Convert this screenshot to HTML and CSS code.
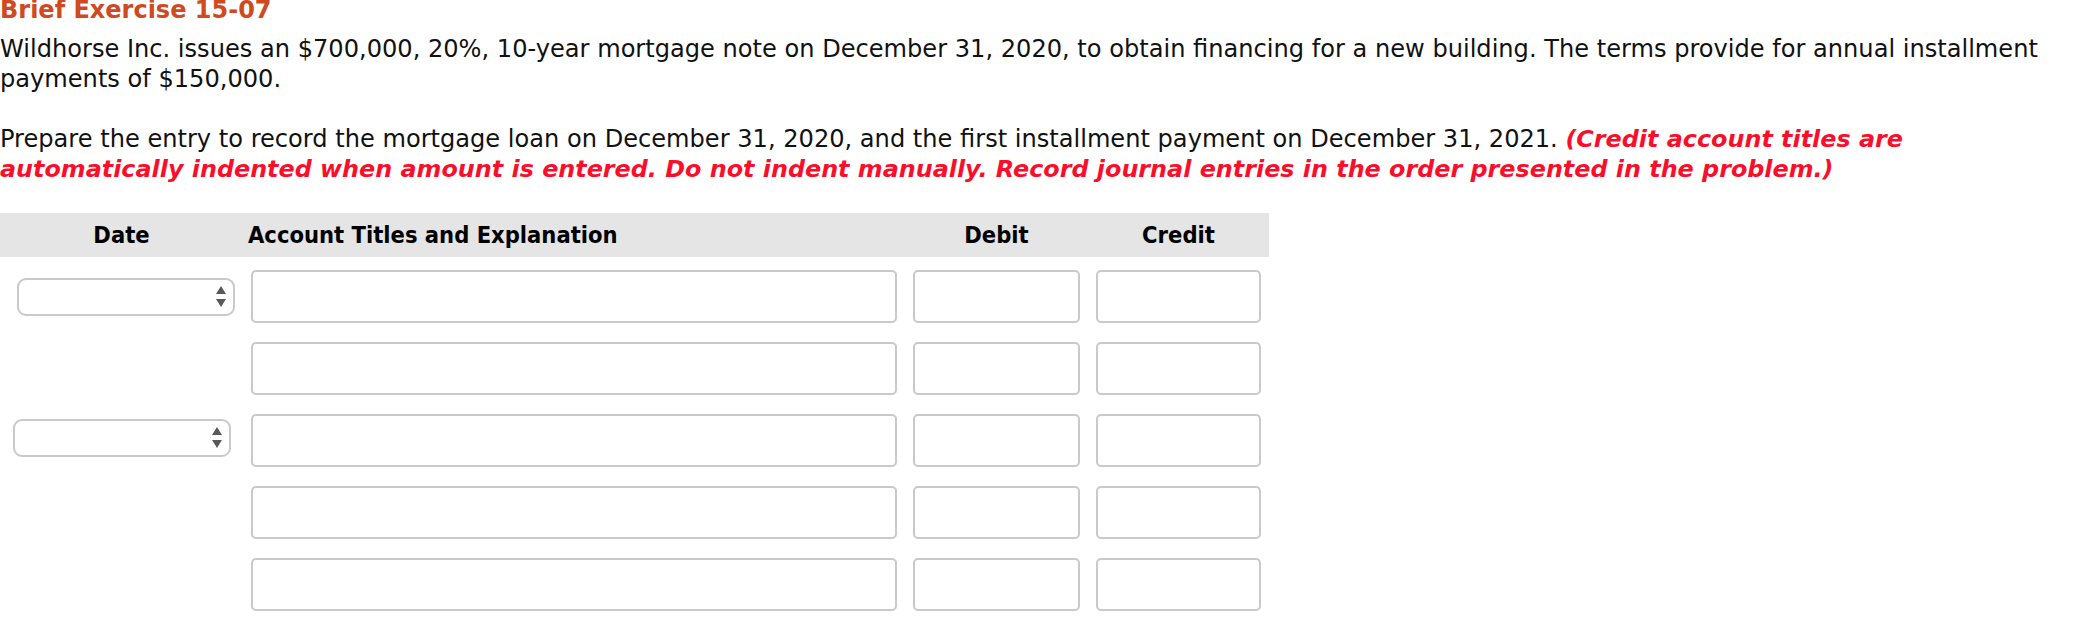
FILE: index.html
```html
<!DOCTYPE html>
<html lang="en">
<head>
<meta charset="utf-8">
<title>Brief Exercise 15-07</title>
<link rel="stylesheet" href="styles.css">
</head>
<body>
<div class="page">
  <h1 class="title">Brief Exercise 15-07</h1>
  <p class="para">Wildhorse Inc. issues an $700,000, 20%, 10-year mortgage note on December 31, 2020, to obtain financing for a new building. The terms provide for annual installment payments of $150,000.</p>
  <p class="para para-gap">Prepare the entry to record the mortgage loan on December 31, 2020, and the first installment payment on December 31, 2021. <em class="note">(Credit account titles are automatically indented when amount is entered. Do not indent manually. Record journal entries in the order presented in the problem.)</em></p>

  <div class="journal">
    <div class="jhead">
      <div class="h-date">Date</div>
      <div class="h-acct">Account Titles and Explanation</div>
      <div class="h-num">Debit</div>
      <div class="h-num">Credit</div>
    </div>
    <div class="jrows">
      <div class="jrow">
        <div class="cell-date">
          <div class="select"><svg class="arrows" width="10" height="21" viewBox="0 0 10 21"><path d="M5 0 L10 8 H0 Z M0 13 H10 L5 21 Z" fill="#595959"/></svg></div>
        </div>
        <div class="cell"><input class="field" type="text"></div>
        <div class="cell"><input class="field" type="text"></div>
        <div class="cell"><input class="field" type="text"></div>
      </div>
      <div class="jrow">
        <div class="cell-date"></div>
        <div class="cell"><input class="field" type="text"></div>
        <div class="cell"><input class="field" type="text"></div>
        <div class="cell"><input class="field" type="text"></div>
      </div>
      <div class="jrow">
        <div class="cell-date cell-date-alt">
          <div class="select"><svg class="arrows" width="10" height="21" viewBox="0 0 10 21"><path d="M5 0 L10 8 H0 Z M0 13 H10 L5 21 Z" fill="#595959"/></svg></div>
        </div>
        <div class="cell"><input class="field" type="text"></div>
        <div class="cell"><input class="field" type="text"></div>
        <div class="cell"><input class="field" type="text"></div>
      </div>
      <div class="jrow">
        <div class="cell-date"></div>
        <div class="cell"><input class="field" type="text"></div>
        <div class="cell"><input class="field" type="text"></div>
        <div class="cell"><input class="field" type="text"></div>
      </div>
      <div class="jrow">
        <div class="cell-date"></div>
        <div class="cell"><input class="field" type="text"></div>
        <div class="cell"><input class="field" type="text"></div>
        <div class="cell"><input class="field" type="text"></div>
      </div>
    </div>
  </div>
</div>
</body>
</html>
```

FILE: styles.css
```css
html, body {
  margin: 0;
  padding: 0;
  background: #ffffff;
}

body {
  font-family: "DejaVu Sans", Verdana, sans-serif;
  font-size: 24px;
  color: #111111;
}

.title {
  margin: 0;
  font-size: 24px;
  font-weight: bold;
  line-height: 21px;
  color: #cf4a1f;
}

.para {
  margin: 13px 0 0;
  font-size: 24.1px;
  line-height: 30px;
}

.para-gap {
  margin-top: 30px;
}

.note {
  font-size: 0.99em;
  font-weight: bold;
  font-style: italic;
  color: #f90f2c;
}

.journal {
  margin-top: 29px;
  width: 1269px;
}

.jhead {
  display: grid;
  grid-template-columns: 243px 662px 183px 181px;
  height: 44px;
  background: #e5e5e5;
  font-family: "DejaVu Sans Condensed", "DejaVu Sans", sans-serif;
  font-stretch: condensed;
  font-weight: bold;
  font-size: 23.5px;
  line-height: 44px;
  color: #000000;
}

.h-date,
.h-num {
  text-align: center;
}

.h-acct {
  padding-left: 5px;
}

.jrows {
  display: flex;
  flex-direction: column;
  gap: 19px;
  padding-top: 13px;
}

.jrow {
  display: grid;
  grid-template-columns: 243px 662px 183px 181px;
  align-items: center;
}

.cell {
  padding: 0 8px;
}

.cell-date {
  padding: 0 8px 0 17px;
}

.cell-date-alt {
  padding: 0 12px 0 13px;
  margin-bottom: 6px;
}

.select {
  box-sizing: border-box;
  height: 38px;
  border: 2px solid #c9c9c9;
  border-radius: 9px;
  background: #ffffff;
  display: flex;
  align-items: center;
  justify-content: flex-end;
  padding-right: 7px;
}

.arrows {
  display: block;
}

.field {
  display: block;
  box-sizing: border-box;
  width: 100%;
  height: 53px;
  margin: 0;
  padding: 0 8px;
  border: 2px solid #c9c9c9;
  border-radius: 5px;
  background: #ffffff;
  font: inherit;
  outline: none;
}
```
